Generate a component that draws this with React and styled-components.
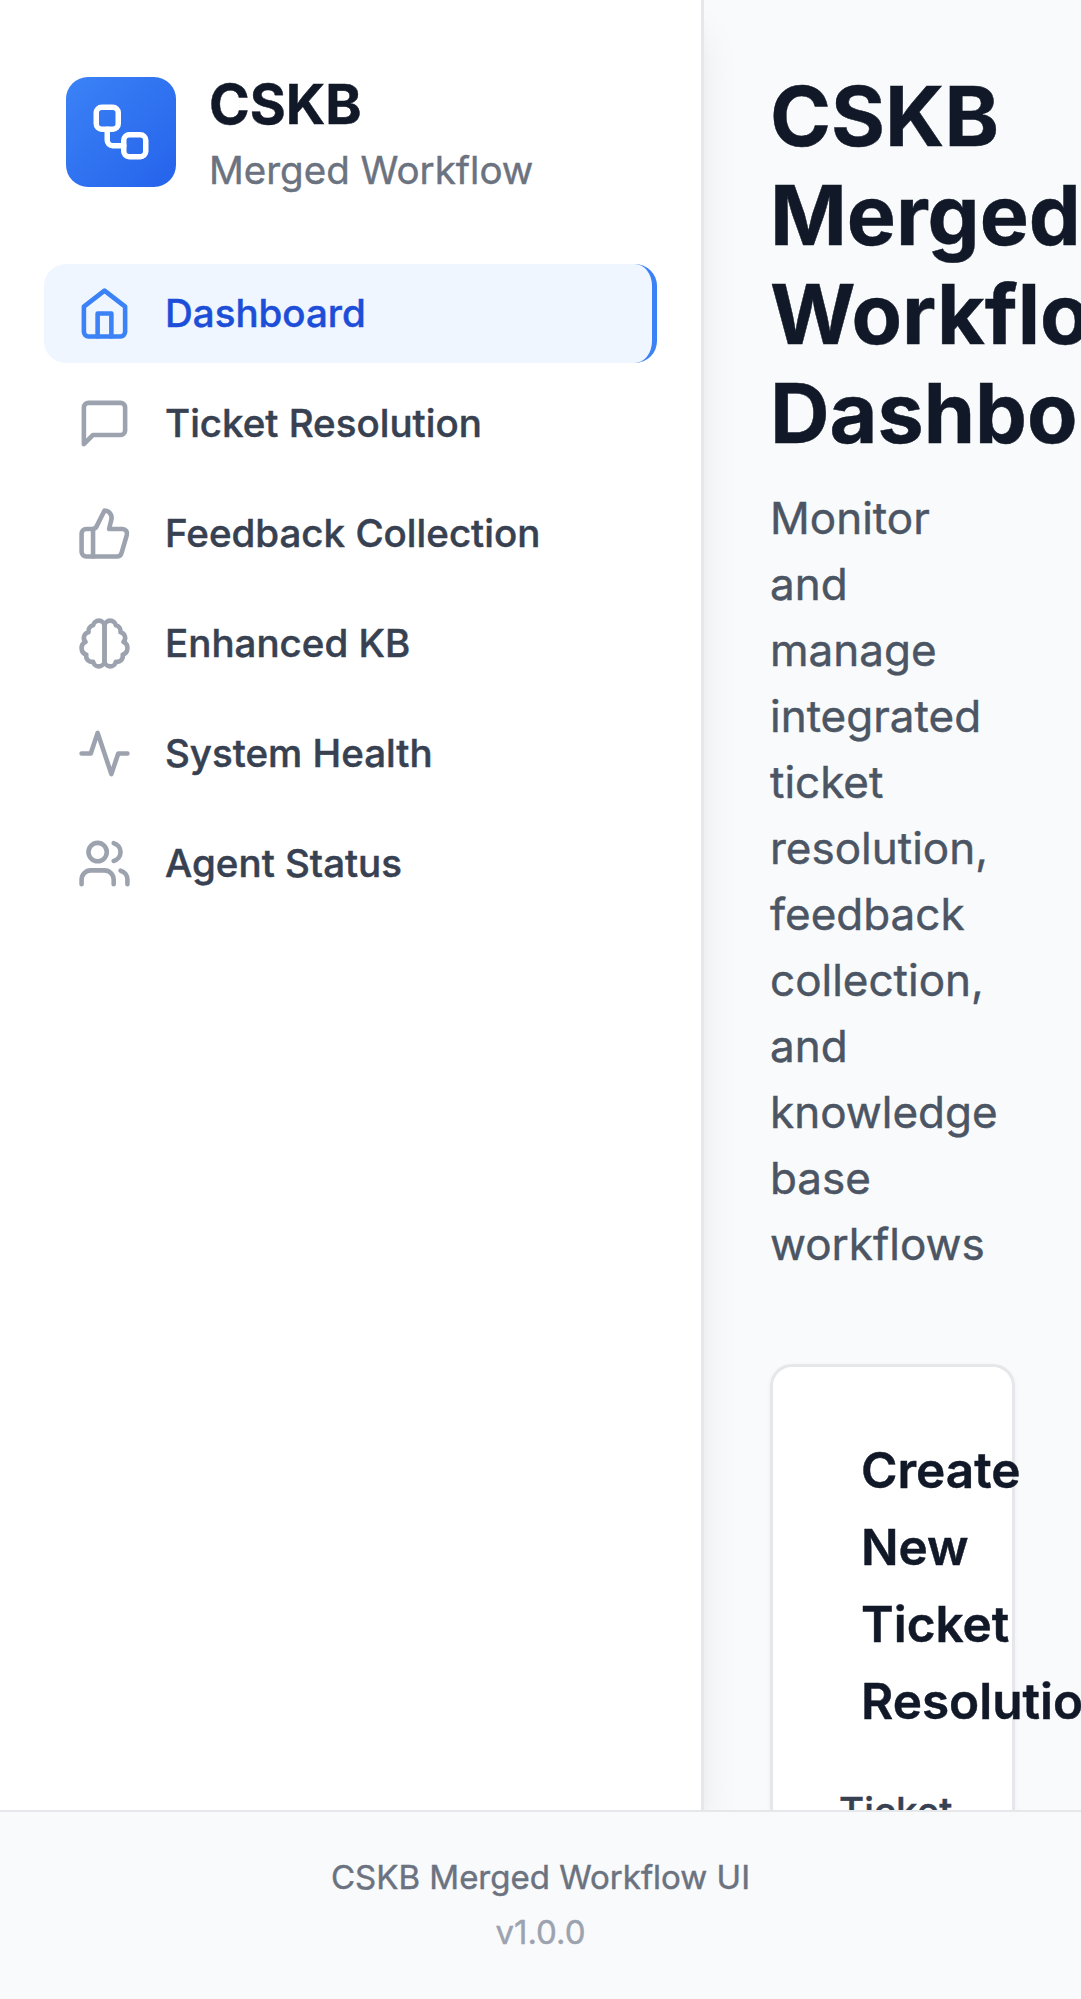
import React from "react";
import styled, { createGlobalStyle } from "styled-components";

const GlobalStyle = createGlobalStyle`
  *, *::before, *::after { box-sizing: border-box; }
  body {
    margin: 0;
    background: #f9fafb;
    font-family: Inter, "Liberation Sans", sans-serif;
    color: #111827;
    overflow: hidden;
    -webkit-text-stroke: 0.45px currentColor;
  }
  h1, h2, h3, p { margin: 0; }
`;

const Page = styled.div`
  display: flex;
  flex-direction: column;
  height: 1999px;
  width: 100%;
  overflow: hidden;
`;

const Body = styled.div`
  display: flex;
  flex: 1;
  min-height: 0;
  overflow: hidden;
`;

const Sidebar = styled.aside`
  flex: 0 0 704px;
  background: #ffffff;
  border-right: 3px solid #e5e7eb;
  box-shadow: 0 27.5px 41.25px -8.25px rgba(0, 0, 0, 0.1),
    0 11px 16.5px -11px rgba(0, 0, 0, 0.1);
  position: relative;
`;

const Brand = styled.div`
  display: flex;
  align-items: center;
  gap: 33px;
  padding: 66px;
`;

const Logo = styled.div`
  width: 110px;
  height: 110px;
  border-radius: 22px;
  display: flex;
  align-items: center;
  justify-content: center;
  background: linear-gradient(to bottom right, #3b82f6, #2563eb);
  color: #ffffff;
`;

const BrandName = styled.h2`
  font-size: 55px;
  line-height: 77px;
  font-weight: 700;
  color: #111827;
`;

const BrandCaption = styled.p`
  font-size: 38.5px;
  line-height: 55px;
  color: #6b7280;
`;

const Nav = styled.nav`
  display: flex;
  flex-direction: column;
  gap: 11px;
  padding: 0 44px;
`;

const NavItem = styled.a`
  display: flex;
  align-items: center;
  gap: 33px;
  height: 99px;
  padding: 0 33px;
  border-radius: 22px;
  font-size: 38.5px;
  line-height: 55px;
  font-weight: 500;
  color: ${(p) => (p.$active ? "#1d4ed8" : "#374151")};
  background: ${(p) => (p.$active ? "#eff6ff" : "transparent")};
  border-right: ${(p) => (p.$active ? "5px solid #3b82f6" : "0")};

  svg {
    color: ${(p) => (p.$active ? "#3b82f6" : "#9ca3af")};
  }
`;

const Glyph = styled.svg`
  display: block;
  flex: none;
  width: ${(p) => p.$size}px;
  height: ${(p) => p.$size}px;
  fill: none;
  stroke: currentColor;
  stroke-width: 2;
  stroke-linecap: round;
  stroke-linejoin: round;
`;

const Main = styled.main`
  flex: 1;
  min-width: 0;
  padding: 67px 66px 66px;
`;

const Title = styled.h1`
  font-size: 82.5px;
  line-height: 99px;
  font-weight: 700;
  color: #111827;
`;

const Lead = styled.p`
  margin-top: 22px;
  font-size: 44px;
  line-height: 66px;
  color: #4b5563;
`;

const Card = styled.section`
  margin-top: 87px;
  height: 1200px;
  padding: 65px 66px;
  background: #ffffff;
  border: 3px solid #e5e7eb;
  border-radius: 22px;
  box-shadow: 0 2.75px 5.5px rgba(0, 0, 0, 0.05);
`;

const CardTitle = styled.h3`
  padding-left: 22px;
  font-size: 49.5px;
  line-height: 77px;
  font-weight: 600;
  color: #111827;
`;

const FieldLabel = styled.label`
  display: block;
  margin-top: 44px;
  font-size: 38.5px;
  line-height: 55px;
  font-weight: 500;
  color: #374151;
`;

const Footer = styled.footer`
  position: relative;
  flex: 0 0 189px;
  padding-top: 43px;
  border-top: 2px solid #e5e7eb;
  background: #f9fafb;
  text-align: center;
  font-size: 33px;
  line-height: 44px;
  color: #6b7280;
`;

const Version = styled.p`
  margin-top: 11px;
  color: #9ca3af;
`;

function Icon({ size = 55, children }) {
  return (
    <Glyph $size={size} viewBox="0 0 24 24" aria-hidden="true">
      {children}
    </Glyph>
  );
}

const items = [
  {
    label: "Dashboard",
    active: true,
    icon: (
      <>
        <path d="m3 9 9-7 9 7v11a2 2 0 0 1-2 2H5a2 2 0 0 1-2-2z" />
        <polyline points="9 22 9 12 15 12 15 22" />
      </>
    ),
  },
  {
    label: "Ticket Resolution",
    icon: <path d="M21 15a2 2 0 0 1-2 2H7l-4 4V5a2 2 0 0 1 2-2h14a2 2 0 0 1 2 2z" />,
  },
  {
    label: "Feedback Collection",
    icon: (
      <>
        <path d="M7 10v12" />
        <path d="M15 5.88 14 10h5.83a2 2 0 0 1 1.92 2.56l-2.33 8A2 2 0 0 1 17.5 22H4a2 2 0 0 1-2-2v-8a2 2 0 0 1 2-2h2.76a2 2 0 0 0 1.79-1.11L12 2h0a3.13 3.13 0 0 1 3 3.88Z" />
      </>
    ),
  },
  {
    label: "Enhanced KB",
    icon: (
      <>
        <path d="M9.5 2A2.5 2.5 0 0 1 12 4.5v15a2.5 2.5 0 0 1-4.96.44 2.5 2.5 0 0 1-2.96-3.08 3 3 0 0 1-.34-5.58 2.5 2.5 0 0 1 1.32-4.24 2.5 2.5 0 0 1 1.98-3A2.5 2.5 0 0 1 9.5 2Z" />
        <path d="M14.5 2A2.5 2.5 0 0 0 12 4.5v15a2.5 2.5 0 0 0 4.96.44 2.5 2.5 0 0 0 2.96-3.08 3 3 0 0 0 .34-5.58 2.5 2.5 0 0 0-1.32-4.24 2.5 2.5 0 0 0-1.98-3A2.5 2.5 0 0 0 14.5 2Z" />
      </>
    ),
  },
  {
    label: "System Health",
    icon: <path d="M22 12h-4l-3 9L9 3l-3 9H2" />,
  },
  {
    label: "Agent Status",
    icon: (
      <>
        <path d="M16 21v-2a4 4 0 0 0-4-4H6a4 4 0 0 0-4 4v2" />
        <circle cx="9" cy="7" r="4" />
        <path d="M22 21v-2a4 4 0 0 0-3-3.87" />
        <path d="M16 3.13a4 4 0 0 1 0 7.75" />
      </>
    ),
  },
];

export default function App() {
  return (
    <Page>
      <GlobalStyle />
      <Body>
        <Sidebar>
          <Brand>
            <Logo>
              <Icon size={66}>
                <rect width="8" height="8" x="3" y="3" rx="2" />
                <path d="M7 11v4a2 2 0 0 0 2 2h4" />
                <rect width="8" height="8" x="13" y="13" rx="2" />
              </Icon>
            </Logo>
            <div>
              <BrandName>CSKB</BrandName>
              <BrandCaption>Merged Workflow</BrandCaption>
            </div>
          </Brand>
          <Nav>
            {items.map((item) => (
              <NavItem key={item.label} $active={item.active}>
                <Icon>{item.icon}</Icon>
                {item.label}
              </NavItem>
            ))}
          </Nav>
        </Sidebar>
        <Main>
          <Title>CSKB Merged Workflow Dashboard</Title>
          <Lead>
            Monitor and manage integrated ticket resolution, feedback
            collection, and knowledge base workflows
          </Lead>
          <Card>
            <CardTitle>Create New Ticket Resolution</CardTitle>
            <FieldLabel>Ticket</FieldLabel>
          </Card>
        </Main>
      </Body>
      <Footer>
        <p>CSKB Merged Workflow UI</p>
        <Version>v1.0.0</Version>
      </Footer>
    </Page>
  );
}
